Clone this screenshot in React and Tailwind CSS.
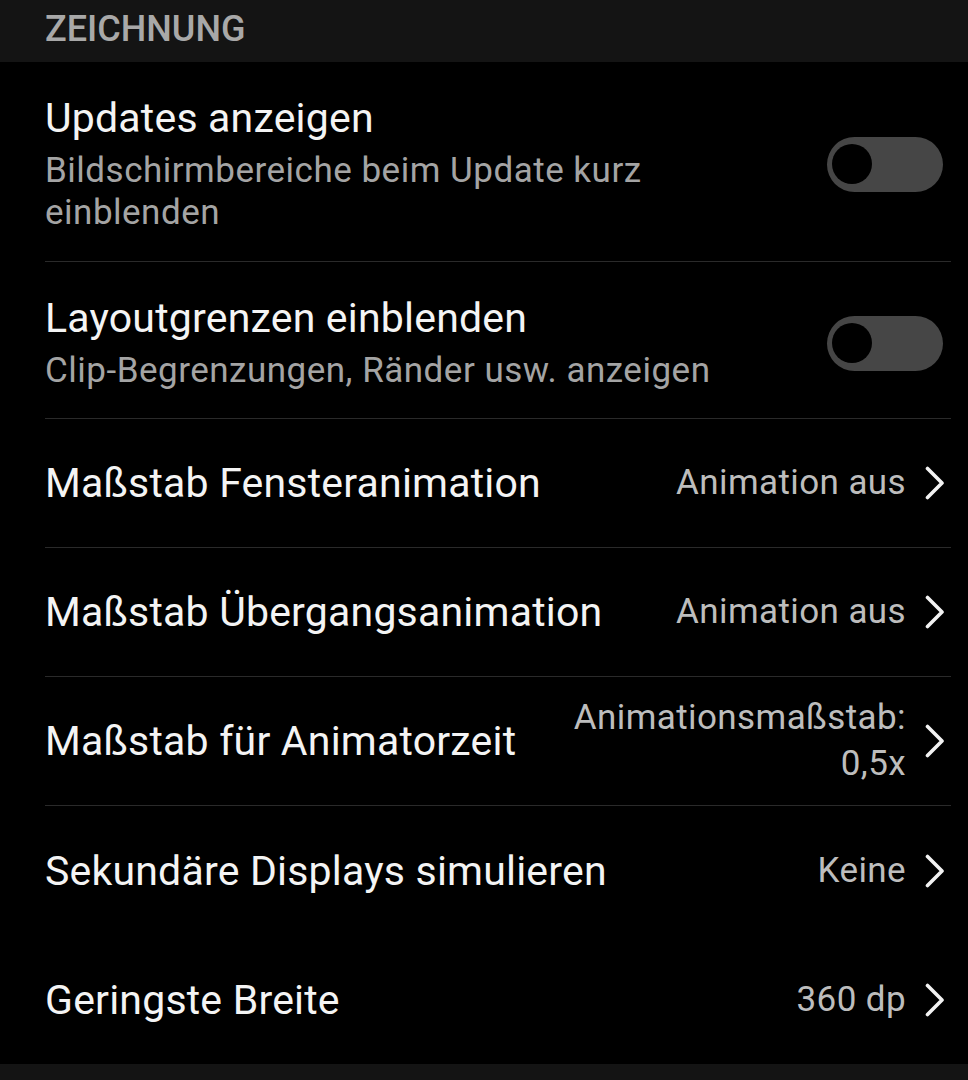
import React from "react";

const rows = [
  { title: "Maßstab Fensteranimation", value: ["Animation aus"], divider: true },
  { title: "Maßstab Übergangsanimation", value: ["Animation aus"], divider: true },
  { title: "Maßstab für Animatorzeit", value: ["Animationsmaßstab:", "0,5x"], divider: true },
  { title: "Sekundäre Displays simulieren", value: ["Keine"], divider: false },
  { title: "Geringste Breite", value: ["360 dp"], divider: false },
];

const Chevron = () => (
  <svg width="20" height="34" viewBox="0 0 20 34" className="shrink-0">
    <polyline
      points="2.5,2.5 17,17 2.5,31.5"
      fill="none"
      stroke="#f2f2f2"
      strokeWidth="3.6"
      strokeLinecap="round"
      strokeLinejoin="round"
    />
  </svg>
);

const Toggle = () => (
  <div className="flex h-[55px] w-[116px] shrink-0 items-center rounded-full bg-[#464646] pl-[5px]">
    <div className="h-[40px] w-[40px] rounded-full bg-black" />
  </div>
);

const ToggleRow = ({ title, subtitle, className }) => (
  <div className={`ml-[45px] mr-[17px] flex items-center border-b border-[#2a2a2a] pr-[8px] ${className}`}>
    <div className="flex-1 pr-[60px]">
      <div className="text-[41px] leading-[48px] tracking-[0.2px] text-[#f4f4f4]">{title}</div>
      <div className="mt-[8px] text-[35px] leading-[42px] tracking-[0.5px] text-[#a4a4a4]">{subtitle}</div>
    </div>
    <Toggle />
  </div>
);

export default function App() {
  return (
    <div
      className="min-h-[1080px] w-[968px] bg-black"
      style={{ fontFamily: "Roboto, 'Noto Sans', sans-serif" }}
    >
      <div className="flex h-[62px] items-start bg-[#141414] pl-[45px] pt-[8px]">
        <span className="text-[36px] font-medium leading-[42px] text-[#a8a8a8]">ZEICHNUNG</span>
      </div>

      <ToggleRow
        title="Updates anzeigen"
        subtitle="Bildschirmbereiche beim Update kurz einblenden"
        className="pt-[32px] pb-[27px]"
      />
      <ToggleRow
        title="Layoutgrenzen einblenden"
        subtitle="Clip-Begrenzungen, Ränder usw. anzeigen"
        className="pt-[32px] pb-[26px]"
      />

      {rows.map((row) => (
        <div
          key={row.title}
          className={`ml-[45px] mr-[17px] flex h-[129px] items-center pr-[6px] ${
            row.divider ? "border-b border-[#2a2a2a]" : ""
          }`}
        >
          <div className="flex-1 text-[41px] leading-[48px] tracking-[0.2px] text-[#f4f4f4]">{row.title}</div>
          <div className="flex items-center gap-[19px]">
            <div className="text-right text-[35px] leading-[46px] tracking-[0.4px] text-[#bdbdbd]">
              {row.value.map((line) => (
                <div key={line}>{line}</div>
              ))}
            </div>
            <Chevron />
          </div>
        </div>
      ))}

      <div className="h-[16px] bg-[#141414]" />
    </div>
  );
}
